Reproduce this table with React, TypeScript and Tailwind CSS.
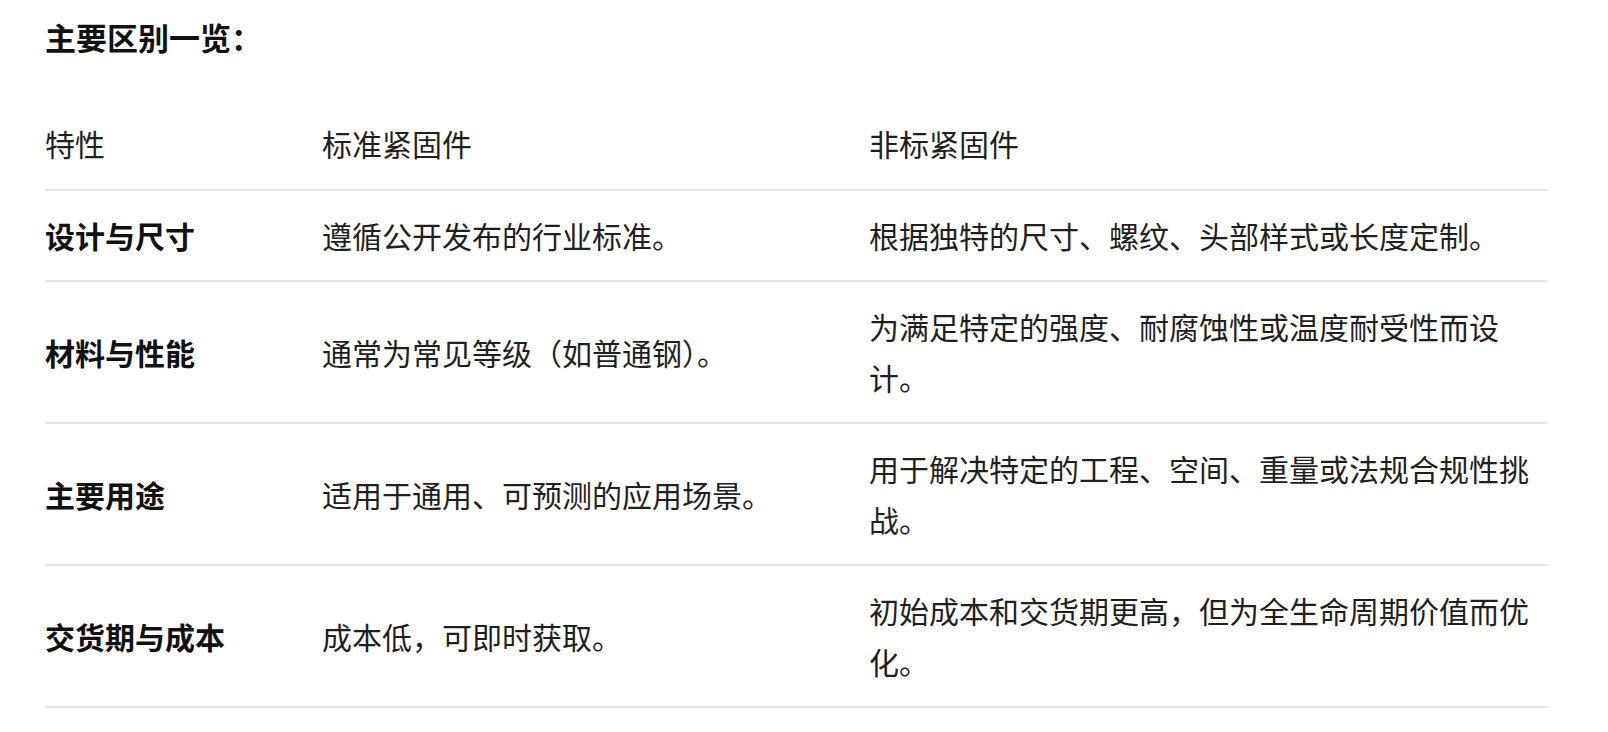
import React from 'react';

interface Row {
  feature: string;
  standard: string;
  custom: string;
}

const rows: Row[] = [
  {
    feature: '设计与尺寸',
    standard: '遵循公开发布的行业标准。',
    custom: '根据独特的尺寸、螺纹、头部样式或长度定制。',
  },
  {
    feature: '材料与性能',
    standard: '通常为常见等级（如普通钢）。',
    custom: '为满足特定的强度、耐腐蚀性或温度耐受性而设计。',
  },
  {
    feature: '主要用途',
    standard: '适用于通用、可预测的应用场景。',
    custom: '用于解决特定的工程、空间、重量或法规合规性挑战。',
  },
  {
    feature: '交货期与成本',
    standard: '成本低，可即时获取。',
    custom: '初始成本和交货期更高，但为全生命周期价值而优化。',
  },
];

export default function App() {
  return (
    <div className="min-h-screen bg-white pl-[45px] pt-[10px] font-['Noto_Sans_CJK_SC',sans-serif] text-[#1f1f1f]">
      <h3 className="text-[31px] font-bold leading-[53px] text-[#111111]">主要区别一览：</h3>

      <div className="mt-[36px] w-[1503px] text-[30px] leading-[51px]">
        <div className="grid grid-cols-[277px_547px_679px] items-center border-b-2 border-[#e5e5e5] pt-[19px] pb-[20px]">
          <div className="pr-4">特性</div>
          <div className="pr-4">标准紧固件</div>
          <div className="pr-4">非标紧固件</div>
        </div>
        {rows.map(row => (
          <div
            key={row.feature}
            className="grid grid-cols-[277px_547px_679px] items-center border-b-2 border-[#e5e5e5] py-[19px]"
          >
            <div className="pr-4 font-bold text-[#111111]">{row.feature}</div>
            <div className="pr-4">{row.standard}</div>
            <div className="pr-4">{row.custom}</div>
          </div>
        ))}
      </div>
    </div>
  );
}
